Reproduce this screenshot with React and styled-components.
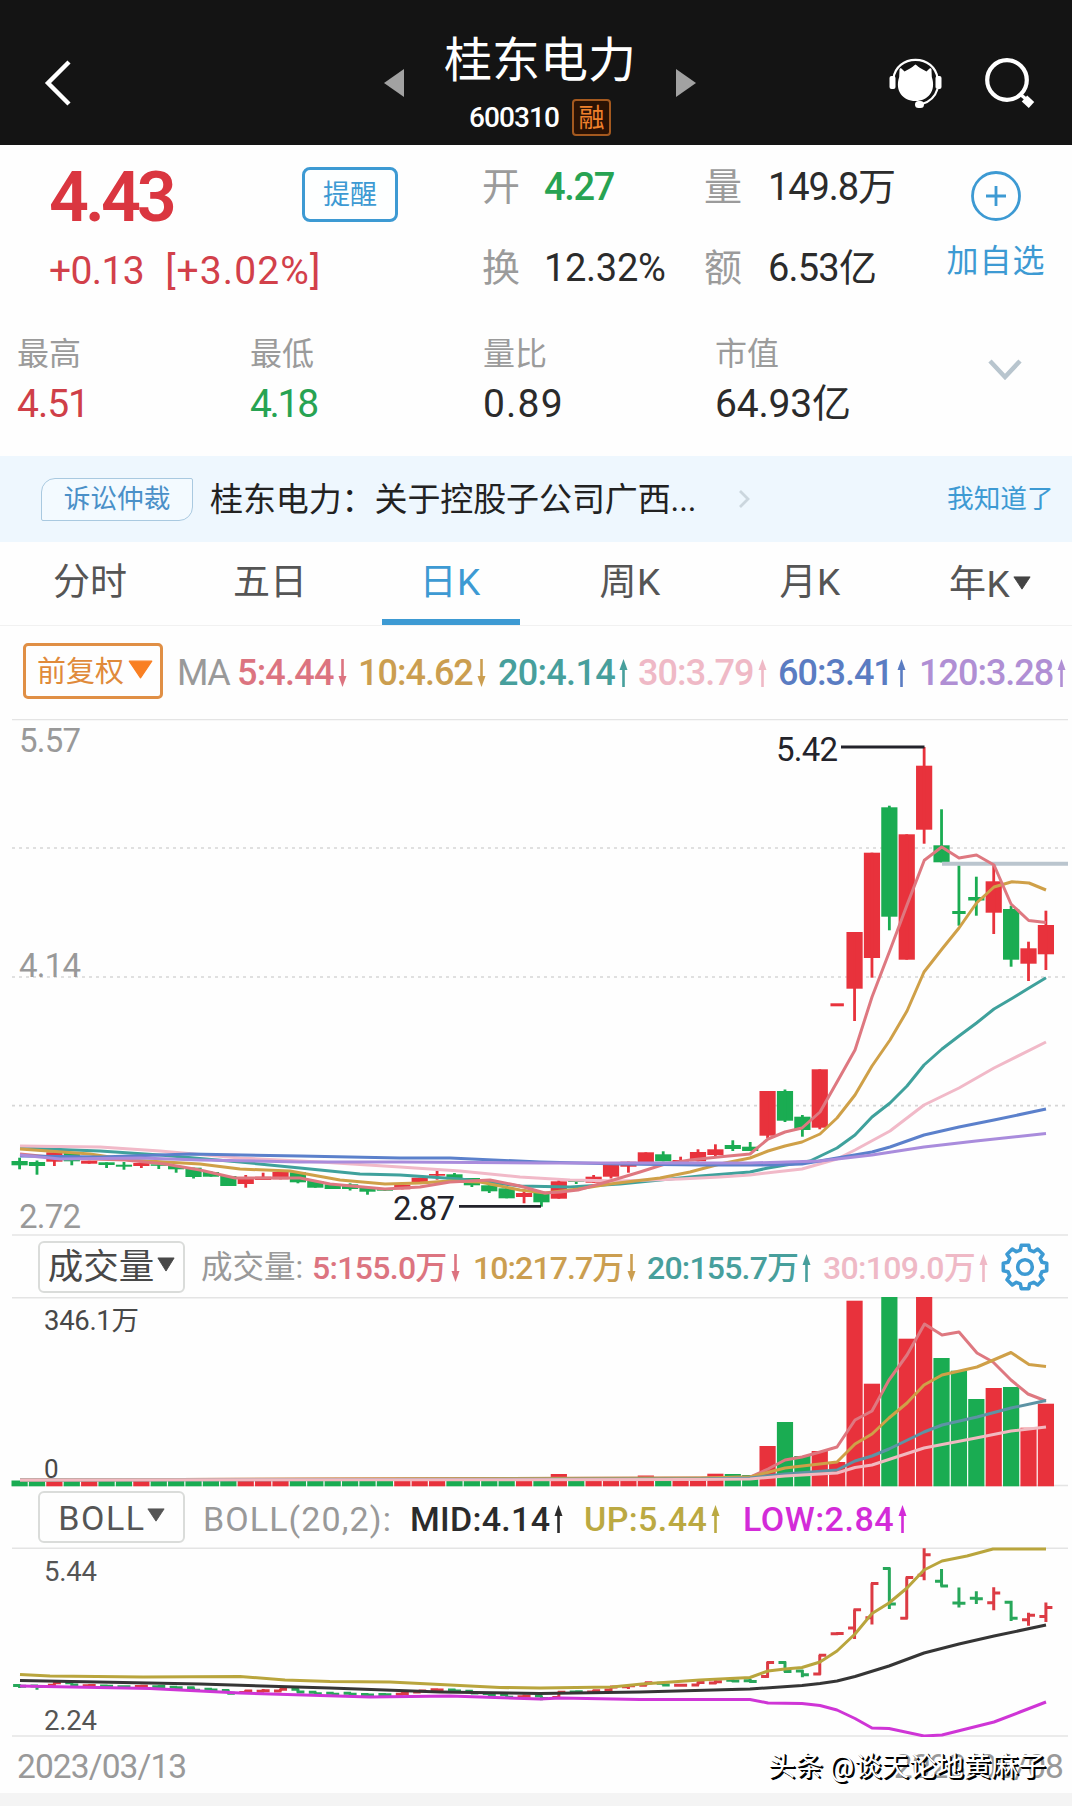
import React from "react";
import styled, { createGlobalStyle } from "styled-components";

const FONT = 'Roboto, "Noto Sans CJK SC", sans-serif';
const RED = "#e8323c";
const GREEN = "#1aac52";
const BLUE = "#3d9ad3";

const Global = createGlobalStyle`
  *, *::before, *::after { box-sizing: border-box; }
  body { margin: 0; background: #fff; font-family: ${FONT}; overflow: hidden; }
  svg { display: block; flex: none; }
`;

const Screen = styled.div`
  width: 1072px;
  height: 1806px;
  overflow: hidden;
  background: #fefefe;
  display: flex;
  flex-direction: column;
`;

const Text = styled.span`
  display: block;
  white-space: nowrap;
  line-height: 1;
  font-size: ${(p) => p.$size}px;
  font-weight: ${(p) => p.$weight || 400};
  color: ${(p) => p.$color || "#2b2b2b"};
  letter-spacing: ${(p) => p.$ls || 0}px;
`;

/* ---------- header ---------- */
const Header = styled.header`
  height: 145px;
  flex: none;
  background: #141414;
  display: grid;
  grid-template-columns: 384px 312px 1fr;
  align-items: center;
  padding-top: 21px;
`;
const BackSlot = styled.div`padding-left: 43px;`;
const TitleRow = styled.div`
  display: flex;
  align-items: center;
  justify-content: space-between;
`;
const TitleBlock = styled.div`
  display: flex;
  flex-direction: column;
  align-items: center;
  gap: 14px;
  margin-top: 7px;
`;
const CodeRow = styled.div`
  display: flex;
  align-items: center;
  gap: 13px;
`;
const MarginBadge = styled.div`
  width: 39px;
  height: 37px;
  border: 2px solid #a4591f;
  border-radius: 4px;
  background: #2a1204;
  display: flex;
  align-items: center;
  justify-content: center;
`;
const HeaderIcons = styled.div`
  display: flex;
  align-items: center;
  gap: 43px;
  padding-left: 193px;
`;

/* ---------- quote ---------- */
const Quote = styled.section`
  height: 185px;
  flex: none;
  display: grid;
  grid-template-columns: 434px 447px 1fr;
  padding: 17px 0 0 49px;
`;
const PriceBlock = styled.div`
  display: flex;
  flex-direction: column;
  gap: 19px;
`;
const PriceRow = styled.div`
  display: grid;
  grid-template-columns: 253px 96px;
  height: 71px;
`;
const ChangeRow = styled.div`
  display: flex;
  gap: 21px;
`;
const RemindButton = styled.button`
  height: 55px;
  margin-top: 5px;
  border: 3px solid ${BLUE};
  border-radius: 8px;
  background: #fdffff;
  padding: 2px 0 0;
  font-family: inherit;
  display: flex;
  align-items: center;
  justify-content: center;
`;
const Facts = styled.div`
  display: grid;
  grid-template-columns: 62px 160px 64px 1fr;
  grid-auto-rows: 38px;
  row-gap: 43px;
  padding-top: 6px;
  margin-left: -1px;
`;
const AddWatch = styled.div`
  display: flex;
  flex-direction: column;
  align-items: center;
  gap: 24px;
  padding-top: 9px;
  width: 132px;
`;
const Stats = styled.section`
  height: 126px;
  flex: none;
  display: grid;
  grid-template-columns: 233px 233px 232px 273px 1fr;
  padding: 8px 0 0 17px;
`;
const Stat = styled.div`
  display: flex;
  flex-direction: column;
  gap: 15px;
`;
const ExpandSlot = styled.div`padding-top: 21px;`;

/* ---------- notice ---------- */
const Notice = styled.section`
  height: 86px;
  flex: none;
  background: #eef7fe;
  display: flex;
  align-items: center;
  padding-left: 41px;
`;
const NoticeTag = styled.div`
  width: 152px;
  height: 43px;
  border: 1.5px solid #a9c9e0;
  border-radius: 14px 2px 14px 2px;
  background: #f3faff;
  display: flex;
  align-items: center;
  justify-content: center;
  margin-right: 17px;
`;
const NoticeTitle = styled.div`width: 528px;`;
const NoticeArrow = styled.div`width: 209px;`;

/* ---------- tabs ---------- */
const Tabs = styled.nav`
  height: 84px;
  flex: none;
  display: grid;
  grid-template-columns: repeat(6, 180px);
  border-bottom: 1px solid #f1f1f1;
`;
const Tab = styled.div`
  display: flex;
  justify-content: center;
  padding-top: ${(p) => (p.$drop ? 24 : 22)}px;
  gap: 3px;
  position: relative;
`;
const TabIndicator = styled.div`
  position: absolute;
  left: 22px;
  top: 77px;
  width: 138px;
  height: 6px;
  background: ${BLUE};
`;
const DropSlot = styled.div`padding-top: ${(p) => p.$top}px;`;

/* ---------- indicator strips ---------- */
const MaStrip = styled.section`
  height: 93px;
  flex: none;
  display: grid;
  grid-template-columns: 154px 60px 121px 140px 140px 140px 141px 1fr;
  align-items: center;
  padding: 0 0 3px 23px;
`;
const AdjustButton = styled.div`
  width: 140px;
  height: 56px;
  border: 3px solid #e08f45;
  border-radius: 5px;
  display: flex;
  align-items: center;
  padding: 2px 0 0 11px;
  gap: 4px;
`;
const Reading = styled.div`
  display: flex;
  align-items: center;
  gap: ${(p) => (p.$gap === undefined ? 4 : p.$gap)}px;
`;
const Lowered = styled.div`padding-top: ${(p) => p.$by || 3}px;`;
const Strip = styled.section`
  height: ${(p) => p.$h}px;
  flex: none;
  display: grid;
  grid-template-columns: ${(p) => p.$cols};
  align-items: center;
  padding-left: 38px;
`;
const Selector = styled.div`
  width: 147px;
  height: 52px;
  border: 2.5px solid #dadcda;
  border-radius: 6px;
  display: flex;
  align-items: center;
  justify-content: center;
  padding-top: 2px;
  gap: ${(p) => p.$gap}px;
`;
const CaretSlot = styled.div`margin-top: -6px;`;
const DateRow = styled.section`
  height: 56px;
  flex: none;
  position: relative;
  display: flex;
  justify-content: space-between;
  padding: 13px 9px 0 17px;
`;
const Watermark = styled.div`
  position: absolute;
  left: 768px;
  top: 17px;
  white-space: pre;
  line-height: 1;
  font-size: 27.4px;
  font-weight: 400;
  color: #fff;
  text-shadow: 2px 2px 0 #000, 1px 1px 0 #000;
`;
const Footer = styled.div`
  flex: 1;
  background: #f4f4f4;
`;

function Caret({ w, h, color }) {
  return (
    <svg width={w} height={h} viewBox="0 0 20 16" preserveAspectRatio="none">
      <path d="M1 1h18L10 15z" fill={color} stroke={color} strokeWidth="1" strokeLinejoin="round" />
    </svg>
  );
}

function Trend({ up, color }) {
  return (
    <svg width="9" height="28" viewBox="0 0 9 28">
      <g transform={up ? undefined : "rotate(180 4.5 14)"} fill={color}>
        <path d="M4.5 0L8.5 11h-8z" />
        <path d="M3.2 9h2.6v19H3.2z" />
      </g>
    </svg>
  );
}

function Value({ children, up, color, size, ls, weight = 500, gap }) {
  return (
    <Lowered>
      <Reading $gap={gap}>
        <Text $size={size} $ls={ls} $weight={weight} $color={color}>{children}</Text>
        <Trend up={up} color={color} />
      </Reading>
    </Lowered>
  );
}

function Gear() {
  const pts = [];
  const n = 8;
  for (let i = 0; i < n; i++) {
    const a = (i * 2 * Math.PI) / n - Math.PI / 2;
    [[-0.27, 17.6], [-0.17, 22], [0.17, 22], [0.27, 17.6]].forEach(([d, r]) => {
      pts.push(`${(25 + r * Math.cos(a + d)).toFixed(2)},${(25 + r * Math.sin(a + d)).toFixed(2)}`);
    });
  }
  return (
    <svg width="50" height="50" viewBox="0 0 50 50" fill="none" stroke={BLUE} strokeWidth="3.6" strokeLinejoin="round">
      <polygon points={pts.join(" ")} />
      <circle cx="25" cy="25" r="7.3" />
    </svg>
  );
}

/* ---------- chart data ---------- */
const PITCH = 17.395;
const cx = (i) => 19.6 + PITCH * i;

// [rising, bodyTop, bodyBottom, high, low] in chart pixels
const CANDLES = [
  [0, 1161, 1165.3, 1157.7, 1169.3], [0, 1162, 1166, 1160.5, 1174.7],
  [1, 1152.3, 1161.7, 1152.3, 1166], [0, 1152.7, 1161.3, 1152.7, 1165.3],
  [1, 1160.7, 1163.7, 1160.7, 1163.7], [0, 1162.3, 1165, 1162.3, 1168],
  [0, 1164.7, 1166.7, 1162, 1169.7], [1, 1163, 1166, 1163, 1168],
  [0, 1164.3, 1165.8, 1164.3, 1169], [0, 1166, 1169.3, 1166, 1172.7],
  [0, 1167.7, 1177, 1167.7, 1178.5], [0, 1172, 1176.7, 1171, 1176.7],
  [0, 1176, 1186, 1176, 1186], [1, 1177.3, 1184, 1175, 1187.7],
  [1, 1176.7, 1180, 1172.7, 1180], [1, 1172, 1179.3, 1172, 1179.3],
  [0, 1172.3, 1182.3, 1172.3, 1183.3], [0, 1181, 1187.7, 1181, 1187.7],
  [0, 1184.3, 1189, 1184.3, 1189], [0, 1184.3, 1189, 1183.3, 1190.5],
  [0, 1187.7, 1191.7, 1187.7, 1194.7], [0, 1188, 1190.7, 1188, 1190.7],
  [1, 1184.7, 1189.3, 1182, 1189.3], [1, 1177.7, 1182.7, 1177.7, 1182.7],
  [1, 1174, 1175.7, 1171, 1179.7], [0, 1174.3, 1179.3, 1173, 1179.3],
  [0, 1178, 1185.3, 1178, 1187], [0, 1185.3, 1191.3, 1185.3, 1193],
  [0, 1188.3, 1198.3, 1187, 1198.3], [1, 1193, 1197, 1189.3, 1203.3],
  [0, 1192.7, 1202.3, 1192.7, 1206.7], [1, 1181.3, 1198.7, 1179.7, 1198.7],
  [0, 1180.3, 1182, 1180.3, 1184], [1, 1176.7, 1182.7, 1175, 1182.7],
  [1, 1165, 1176.7, 1165, 1178.5], [1, 1161.7, 1166.7, 1161.7, 1172.7],
  [1, 1152.3, 1162.3, 1152.3, 1162.3], [0, 1154.3, 1161.3, 1151.3, 1161.3],
  [1, 1160, 1162, 1156.7, 1162], [1, 1152, 1161.3, 1149.3, 1161.3],
  [1, 1149.3, 1155, 1144.3, 1157], [0, 1145, 1149, 1140.3, 1151],
  [0, 1146.7, 1151, 1142, 1151], [1, 1091, 1135.7, 1091, 1138.3],
  [0, 1091, 1120.7, 1089.5, 1122], [0, 1116.7, 1130, 1115, 1136.7],
  [1, 1069.3, 1127.7, 1069.3, 1129.3], [1, 1003.3, 1006.3, 1004.5, 1005],
  [1, 932, 988.7, 932, 1021], [1, 852.7, 958, 852.7, 977.7],
  [0, 807.3, 916.7, 805.7, 930.3], [1, 834.3, 959.7, 834.3, 959.7],
  [1, 765.7, 829.7, 747, 843.7], [0, 845.3, 862.3, 809.3, 862.3],
  [0, 911, 914, 865.3, 925.7], [0, 897, 900.5, 876.7, 915.7],
  [1, 881.3, 912.7, 865, 934], [0, 909, 959.7, 905.7, 966.7],
  [1, 948.3, 963.7, 941.7, 981], [1, 925, 954.3, 910.7, 970],
];

const VOLUME_TOPS = {
  31: 1474, 34: 1480, 35: 1479, 36: 1475.5, 37: 1477, 38: 1479, 39: 1477, 40: 1473.7, 41: 1474, 42: 1475,
  43: 1446, 44: 1422, 45: 1456, 46: 1451, 47: 1462, 48: 1300.7, 49: 1383.7, 50: 1297, 51: 1338.7, 52: 1297,
  53: 1358, 54: 1370.7, 55: 1399, 56: 1388, 57: 1387, 58: 1427.7, 59: 1403.7,
};

const MA_LINES = [
  ["#3fa19c", "20,1148 100,1151 160,1155 240,1162 300,1168 360,1174 400,1175 460,1179 520,1186 570,1187 620,1184 660,1180 700,1176 750,1172 768,1168 810,1161 837,1148 855,1135 872,1117 890,1103 907,1086 924,1065 942,1049 959,1036 976.5,1023 994,1009 1012.7,998 1029,988 1046,977.7"],
  ["#f1b9c8", "20,1146 100,1147 160,1151 240,1158 320,1162 400,1167 460,1171 520,1177 570,1180 620,1181 680,1179 720,1177 750,1175 775,1172 802,1169 837,1159 855,1150 890,1131 924,1105 959,1088 994,1068 1046,1042"],
  ["#cfa048", "20,1149 90,1154 130,1160 200,1164 240,1169 290,1171 340,1180 385,1184 420,1183 450,1181 480,1182 520,1190 545,1193 578,1189 610,1184 660,1178 690,1172 720,1164 750,1158 768,1151 785,1146 802,1142 820,1134 837,1118 855,1095 872,1066 890,1040 907,1011 924,972 942,949 959,928 976.5,903 994,887 1012,881.7 1029,883 1046,890"],
  ["#de7880", "20,1154 60,1158 125,1160 165,1164 200,1170 235,1178 275,1178 300,1178 330,1184 385,1189 420,1187 450,1182 490,1180 520,1186 545,1193 560,1192 578,1190 610,1181 640,1172 665,1164 690,1160 718,1157 750,1154 768,1139 785,1132 802,1128 820,1112 837,1082 855,1050 872,997 889.7,951 907,905 924.3,860.3 941.7,847 959,858 976.5,855 994,865 1011,904 1028.7,920.5 1046,922.5"],
  ["#5b80cb", "20,1156 100,1157 190,1154 300,1156 400,1158 450,1158 540,1162 620,1164 700,1165 770,1165 802,1164 837,1158 872,1152 890,1147 924,1135 959,1127 994,1120 1046,1109"],
  ["#a98cdc", "20,1155 60,1159 140,1158 200,1160 300,1162 400,1162 540,1163 650,1163 750,1163 820,1161 872,1155 924,1147 976,1141 1046,1133.5"],
];

const VOLUME_LINES = [
  ["#de7880", "20,1480 700,1478 750,1477 768,1469 785,1460 802,1457 820,1452 837,1447 855,1420 872,1411 889,1380 907,1355 924.5,1324 942,1335 959,1332 977,1353 993,1362 1011,1380 1028,1394 1046,1401"],
  ["#cfa048", "20,1480 700,1478 750,1477 785,1468 837,1462 855,1444 872,1434 889,1418 907,1403 924,1385 942,1375 977,1367 1011,1352.5 1029,1364.5 1046,1366.5"],
  ["#5d93a4", "20,1480 700,1479 750,1478 785,1474 837,1470 855,1461 872,1456 889,1449 924,1432 942,1425 977,1417 1011,1408 1046,1400.5"],
  ["#f1b9c0", "20,1480 700,1479.5 750,1479 785,1476 837,1473 855,1467.5 872,1465 924,1448 976,1438 1011,1431 1046,1427"],
];

const BOLL_LINES = [
  ["#353535", "20,1680.5 200,1684 330,1688 440,1692 540,1693.5 640,1692 750,1689 802,1685.5 820,1683.5 837,1681 855,1676.5 889,1666 924,1653 959,1644 994,1636 1046,1625"],
  ["#cf35d6", "20,1686 150,1688.5 240,1693 370,1697 450,1696 540,1699 560,1698 640,1699.5 750,1699.5 768,1703 802,1703.5 820,1705.5 837,1710 855,1718.5 872,1728 889,1728.5 924,1736 942,1735 994,1722 1020,1712 1046,1702"],
  ["#b9a53d", "20,1674.5 50,1676 143,1677 240,1676.5 285,1680 330,1681.5 390,1682 430,1684 500,1687.5 540,1688 612,1687 642,1684 700,1680 750,1677.5 768,1671 785,1669 802,1667.5 820,1662 837,1651 855,1634 872,1613.5 889,1603 907,1588 924,1570 942,1561 967,1556 993,1549 1046,1549"],
];

const Lines = ({ data }) =>
  data.map(([color, points], i) => (
    <polyline key={i} points={points} fill="none" stroke={color} strokeWidth="3" strokeLinejoin="round" />
  ));

const Rule = ({ y, color = "#e4e4e4" }) => <path d={`M12 ${y}H1068`} stroke={color} strokeWidth="1.6" />;

function AxisText({ x, y, w, size, color, children }) {
  return (
    <text x={x} y={y} fontSize={size} fill={color} textLength={w} fontFamily={FONT}>
      {children}
    </text>
  );
}

function PriceChart() {
  return (
    <svg width="1072" height="517" viewBox="0 719 1072 517">
      <Rule y={719.5} />
      <Rule y={1235} />
      {[848, 977, 1105.6].map((y) => (
        <path key={y} d={`M12 ${y}H1068`} stroke="#d6d6d6" strokeWidth="1.6" strokeDasharray="3 4" />
      ))}
      {CANDLES.map(([up, t, b, h, l], i) => (
        <g key={i} fill={up ? RED : GREEN}>
          <rect x={cx(i) - (i === 47 || i === 54 ? 6.7 : 8.1)} y={t} width={i === 47 || i === 54 ? 13.4 : 16.2} height={b - t} />
          <rect x={cx(i) - 1.4} y={h} width="2.8" height={l - h} />
        </g>
      ))}
      <path d="M942 863.7H1068" stroke="#bac5ce" strokeWidth="4" />
      <Lines data={MA_LINES} />
      <path d="M841 747H924.5M459 1206.3H541" stroke="#23232b" strokeWidth="2.8" />
      <AxisText x={19} y={752} w={62} size={33} color="#999">5.57</AxisText>
      <AxisText x={19} y={977} w={62} size={33} color="#999">4.14</AxisText>
      <AxisText x={19} y={1228} w={62} size={33} color="#999">2.72</AxisText>
      <AxisText x={776} y={761} w={62} size={33} color="#23232b">5.42</AxisText>
      <AxisText x={393} y={1219.5} w={62} size={33} color="#23232b">2.87</AxisText>
    </svg>
  );
}

function VolumeChart() {
  return (
    <svg width="1072" height="190" viewBox="0 1297 1072 190">
      <Rule y={1297.8} />
      <Rule y={1485.5} />
      {CANDLES.map(([up], i) => {
        const top = VOLUME_TOPS[i] || 1480.5;
        return <rect key={i} x={cx(i) - 8.1} y={top} width="16.2" height={1486.3 - top} fill={up ? RED : GREEN} />;
      })}
      <Lines data={VOLUME_LINES} />
      <AxisText x={44} y={1329.5} w={95} size={27.5} color="#484848">346.1万</AxisText>
      <AxisText x={44} y={1477.5} w={14} size={26} color="#484848">0</AxisText>
    </svg>
  );
}

function BollChart() {
  const y = (v) => 1548.3 + (v - 747) * 0.3308;
  return (
    <svg width="1072" height="190" viewBox="0 1547 1072 190">
      <Rule y={1548.3} />
      <Rule y={1736} />
      {CANDLES.map(([up, t, b, h, l], i) => {
        const open = y(up ? b - 1 : t + 1);
        const close = y(up ? t + 1 : b - 1);
        const x = cx(i);
        return (
          <path
            key={i}
            d={`M${x} ${y(h)}V${y(l)}M${x - 6.5} ${open}H${x + 1}M${x - 1} ${close}H${x + 6.5}`}
            stroke={up ? "#dc3b44" : "#27a75a"}
            strokeWidth="3"
          />
        );
      })}
      <Lines data={BOLL_LINES} />
      <AxisText x={44} y={1580.5} w={53} size={27.5} color="#555">5.44</AxisText>
      <AxisText x={44} y={1729.5} w={53} size={27.5} color="#555">2.24</AxisText>
    </svg>
  );
}

const TABS = ["分时", "五日", "日K", "周K", "月K", "年K"];

export default function App() {
  return (
    <Screen>
      <Global />
      <Header>
        <BackSlot>
          <svg width="30" height="46" viewBox="0 0 30 46" fill="none" stroke="#fff" strokeWidth="4.4">
            <path d="M26 2L5 23l21 21" />
          </svg>
        </BackSlot>
        <TitleRow>
          <svg width="20" height="28" viewBox="0 0 20 28"><path d="M20 0v28L0 14z" fill="#a2a2a2" /></svg>
          <TitleBlock>
            <Text $size={48} $color="#fff">桂东电力</Text>
            <CodeRow>
              <Text $size={28} $ls={-0.9} $weight={500} $color="#fff">600310</Text>
              <MarginBadge><Text $size={26} $color="#f0812c">融</Text></MarginBadge>
            </CodeRow>
          </TitleBlock>
          <svg width="20" height="28" viewBox="0 0 20 28"><path d="M0 0v28l20-14z" fill="#a2a2a2" /></svg>
        </TitleRow>
        <HeaderIcons>
          <svg width="53" height="50" viewBox="0 0 53 50" fill="#fff">
            <path d="M10.5 12C10.500 9.800 12 9.600 13.500 11.500L15.500 13.500L20.500 10.800C23 9.500 24.500 8 26.500 6.500C28.500 8 30 9.500 32.500 10.800L37.500 13.500L39.500 11.500C41 9.600 42.800 9.800 42.500 12L42.800 19C47.500 33 39 43 26.500 43S5.500 33 10.200 19Z" />
            <path d="M4.500 20C6 9 15 1.800 26.500 1.800S47 9 48.500 20" fill="none" stroke="#fff" strokeWidth="2.200" />
            <path d="M48.500 31C46 39 40 44 33 46" fill="none" stroke="#fff" strokeWidth="2.200" />
            <rect x="0.500" y="18" width="6" height="13" rx="2" />
            <rect x="46.500" y="18" width="6" height="13" rx="2" />
            <rect x="26" y="43" width="9" height="7" rx="3.500" />
          </svg>
          <svg width="50" height="50" viewBox="0 0 50 50" fill="none" stroke="#fff">
            <circle cx="22" cy="22" r="19.800" strokeWidth="4.200" />
            <path d="M35.500 36.500L41 41" strokeWidth="3.500" />
            <path d="M39.500 40.500L46.500 47" strokeWidth="8" />
          </svg>
        </HeaderIcons>
      </Header>

      <Quote>
        <PriceBlock>
          <PriceRow>
            <Text $size={70} $weight={600} $ls={-4} $color="#da3640">4.43</Text>
            <RemindButton><Text $size={27} $color={BLUE}>提醒</Text></RemindButton>
          </PriceRow>
          <ChangeRow>
            <Text $size={39} $ls={-0.6} $color="#d2404a">+0.13</Text>
            <Text $size={39} $ls={1.1} $color="#d2404a">[+3.02%]</Text>
          </ChangeRow>
        </PriceBlock>
        <Facts>
          <Text $size={38} $color="#9b9b9b">开</Text>
          <Text $size={38} $ls={-1.3} $weight={500} $color="#27a352">4.27</Text>
          <Text $size={38} $color="#9b9b9b">量</Text>
          <Text $size={38} $ls={-1.1}>149.8万</Text>
          <Text $size={38} $color="#9b9b9b">换</Text>
          <Text $size={38} $ls={-0.3}>12.32%</Text>
          <Text $size={38} $color="#9b9b9b">额</Text>
          <Text $size={38} $ls={-0.8}>6.53亿</Text>
        </Facts>
        <AddWatch>
          <svg width="50" height="50" viewBox="0 0 50 50" fill="none" stroke={BLUE} strokeWidth="2.8">
            <circle cx="25" cy="25" r="23.5" />
            <path d="M15 25h20M25 15v20" />
          </svg>
          <Text $size={32} $ls={1} $color={BLUE}>加自选</Text>
        </AddWatch>
      </Quote>

      <Stats>
        <Stat>
          <Text $size={32} $color="#9b9b9b">最高</Text>
          <Text $size={39} $ls={-1} $color="#cf3f48">4.51</Text>
        </Stat>
        <Stat>
          <Text $size={32} $color="#9b9b9b">最低</Text>
          <Text $size={39} $ls={-2.3} $color="#27a352">4.18</Text>
        </Stat>
        <Stat>
          <Text $size={32} $color="#9b9b9b">量比</Text>
          <Text $size={39} $ls={1.2}>0.89</Text>
        </Stat>
        <Stat>
          <Text $size={32} $color="#9b9b9b">市值</Text>
          <Text $size={39} $ls={-0.2}>64.93亿</Text>
        </Stat>
        <ExpandSlot>
          <svg width="34" height="22" viewBox="0 0 34 22" fill="none" stroke="#b8c5ce" strokeWidth="4.5">
            <path d="M2 2l15 16L32 2" />
          </svg>
        </ExpandSlot>
      </Stats>

      <Notice>
        <NoticeTag><Text $size={26.7} $color="#4a90c8">诉讼仲裁</Text></NoticeTag>
        <NoticeTitle><Text $size={33} $ls={-0.1} $color="#222">桂东电力：关于控股子公司广西...</Text></NoticeTitle>
        <NoticeArrow>
          <svg width="12" height="18" viewBox="0 0 12 18" fill="none" stroke="#cbd6de" strokeWidth="2.8">
            <path d="M2 1l8 8-8 8" />
          </svg>
        </NoticeArrow>
        <Text $size={26.7} $color={BLUE}>我知道了</Text>
      </Notice>

      <Tabs>
        {TABS.map((t, i) => (
          <Tab key={t} $drop={i === 5}>
            <Text $size={37} $color={i === 2 ? BLUE : "#555"} $ls={i > 1 ? 0.4 : 0}>{t}</Text>
            {i === 5 && <DropSlot $top={10}><Caret w={18} h={14} color="#444" /></DropSlot>}
            {i === 2 && <TabIndicator />}
          </Tab>
        ))}
      </Tabs>

      <MaStrip>
        <AdjustButton>
          <Text $size={29} $color="#e08a3a">前复权</Text>
          <CaretSlot><Caret w={25} h={19} color="#f97f22" /></CaretSlot>
        </AdjustButton>
        <Lowered><Text $size={36} $ls={-1.5} $color="#999">MA</Text></Lowered>
        <Value size={36} ls={-0.8} color="#dc7480">5:4.44</Value>
        <Value size={36} ls={-1} color="#cb9e50">10:4.62</Value>
        <Value size={36} ls={-0.7} up color="#479f9c">20:4.14</Value>
        <Value size={36} ls={-0.9} up color="#efb9c6">30:3.79</Value>
        <Value size={36} ls={-1} up color="#5a7cc2">60:3.41</Value>
        <Value size={36} ls={-1} up color="#b08fd4">120:3.28</Value>
      </MaStrip>

      <PriceChart />

      <Strip $h={61} $cols="163px 111px 161px 174px 176px 177px 1fr">
        <Selector $gap={3}>
          <Text $size={35.5} $color="#484848">成交量</Text>
          <CaretSlot><Caret w={18} h={15} color="#484848" /></CaretSlot>
        </Selector>
        <Lowered><Text $size={31.5} $color="#999">成交量:</Text></Lowered>
        <Value size={32} ls={-0.7} color="#dc7480">5:155.0万</Value>
        <Value size={32} ls={-0.9} color="#cb9e50">10:217.7万</Value>
        <Value size={32} ls={-0.8} up color="#479f9c">20:155.7万</Value>
        <Value size={32} ls={-0.7} up color="#efb9c6">30:109.0万</Value>
        <Gear />
      </Strip>

      <VolumeChart />

      <Strip $h={60} $cols="165px 207px 174px 159px 1fr">
        <Selector $gap={1}>
          <Text $size={34} $ls={1.6} $color="#555">BOLL</Text>
          <CaretSlot><Caret w={18} h={14} color="#555" /></CaretSlot>
        </Selector>
        <Lowered><Text $size={34} $ls={1.1} $color="#999">BOLL(20,2):</Text></Lowered>
        <Value size={34} ls={0.3} up color="#2b2b2b">MID:4.14</Value>
        <Value size={34} ls={0.4} up color="#bba942">UP:5.44</Value>
        <Value size={34} ls={0.5} up color="#d32bd8">LOW:2.84</Value>
      </Strip>

      <BollChart />

      <DateRow>
        <Text $size={33.5} $ls={-0.9} $color="#999">2023/03/13</Text>
        <Text $size={33.5} $ls={-0.9} $color="#999">2023/06/08</Text>
        <Watermark>头条 @谈天论地黄麻子</Watermark>
      </DateRow>
      <Footer />
    </Screen>
  );
}
